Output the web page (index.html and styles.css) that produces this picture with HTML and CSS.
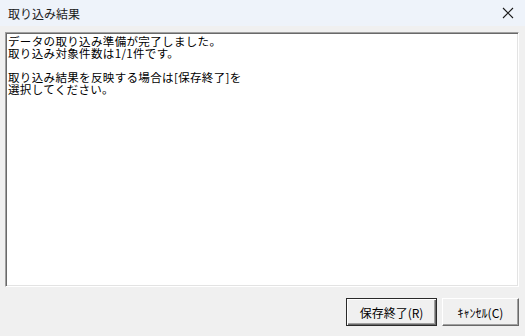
FILE: index.html
```html
<!DOCTYPE html>
<html lang="ja">
<head>
<meta charset="utf-8">
<link rel="stylesheet" href="styles.css">
</head>
<body>
<div class="window">
  <div class="titlebar">
    <span class="title">取り込み結果</span>
    <svg class="close" width="12" height="12" viewBox="0 0 12 12"><path d="M1 1L11 11M11 1L1 11" stroke="#1a1a1a" stroke-width="1.1" fill="none"/></svg>
  </div>
  <div class="body">
    <div class="textbox">
      <div class="line">データの取り込み準備が完了しました。</div>
      <div class="line">取り込み対象件数は1/1件です。</div>
      <div class="line">&nbsp;</div>
      <div class="line">取り込み結果を反映する場合は[保存終了]を</div>
      <div class="line">選択してください。</div>
    </div>
    <div class="buttons">
      <div class="btn default"><span>保存終了(R)</span></div>
      <div class="btn cancel"><span>ｷｬﾝｾﾙ(C)</span></div>
    </div>
  </div>
</div>
</body>
</html>
```
FILE: styles.css
```css
html, body {
  margin: 0;
  padding: 0;
  width: 525px;
  height: 336px;
  overflow: hidden;
  background: #f0f0f0;
  font-family: "Noto Sans CJK JP", "Noto Sans", sans-serif;
}
.window {
  display: flex;
  flex-direction: column;
  width: 525px;
  height: 336px;
}
.titlebar {
  height: 26px;
  background: #eef3fa;
  display: flex;
  align-items: center;
  justify-content: space-between;
  padding: 0 11px 0 8px;
  box-sizing: border-box;
}
.title {
  font-size: 12px;
  color: #1a1a1a;
}
.close {
  display: block;
}
.body {
  flex: 1;
  display: flex;
  flex-direction: column;
  padding: 6px 6px 10px 5px;
}
.textbox {
  height: 255px;
  box-sizing: border-box;
  background: #fff;
  border-top: 1px solid #a0a0a0;
  border-left: 1px solid #a0a0a0;
  border-right: 1px solid #ffffff;
  border-bottom: 1px solid #ffffff;
  box-shadow: inset 1px 1px 0 #696969, inset -1px -1px 0 #e3e3e3;
  padding: 2px 2px;
}
.line {
  font-size: 11.5px;
  line-height: 12px;
  height: 12px;
  color: #000;
  white-space: nowrap;
  letter-spacing: 0.35px;
}
.buttons {
  margin-top: 11px;
  display: flex;
  justify-content: flex-end;
  gap: 5px;
}
.btn {
  height: 28px;
  box-sizing: border-box;
  background: #f0f0f0;
  display: flex;
  align-items: center;
  justify-content: center;
  font-size: 12px;
  color: #000;
}
.btn.default {
  width: 91px;
  border: 1px solid #2a2a2a;
  box-shadow: inset 1px 1px 0 #ffffff, inset -1px -1px 0 #696969, inset -2px -2px 0 #a0a0a0;
}
.btn.cancel {
  width: 77px;
  border-top: 1px solid #ffffff;
  border-left: 1px solid #ffffff;
  border-right: 1px solid #696969;
  border-bottom: 1px solid #696969;
  box-shadow: inset -1px -1px 0 #a0a0a0;
}
```
